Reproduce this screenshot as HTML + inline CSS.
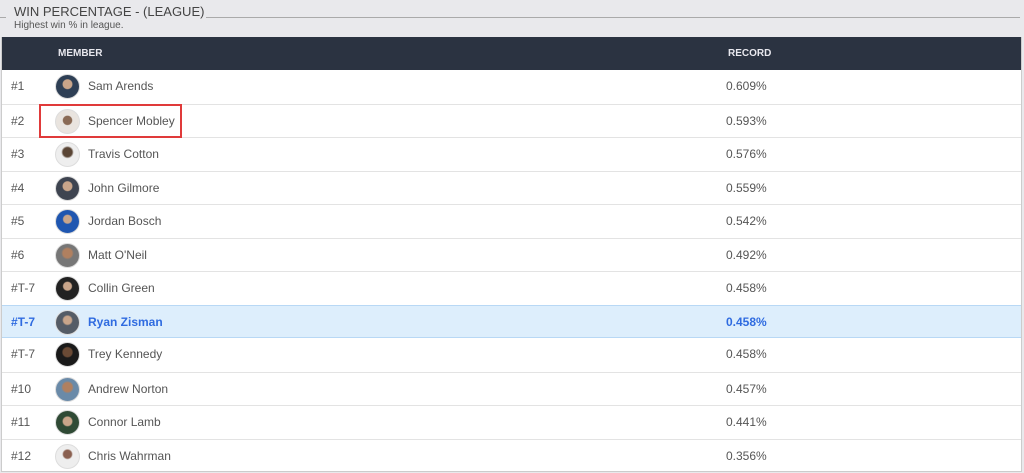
<!DOCTYPE html>
<html><head><style>
body{margin:0;width:1024px;height:473px;background:#e9e9ec;font-family:"Liberation Sans",sans-serif;position:relative;overflow:hidden}
.t{position:absolute;left:14px;top:4px;font-size:13px;color:#444;letter-spacing:0}
.l1{position:absolute;left:0;top:17px;width:6px;height:1px;background:#aaa}
.l2{position:absolute;left:206px;top:17px;width:814px;height:1px;background:#aaa}
.s{position:absolute;left:14px;top:20px;font-size:10px;color:#555}
.tb{position:absolute;left:1px;top:37px;width:1021px;height:435px;background:#fff;border:1px solid #ccc;border-top:none;box-sizing:border-box}
.h{height:33px;background:#2b3341;color:#e8e8ee;font-size:10px;font-weight:bold;position:relative}
.h span{position:absolute;top:11px}
.r{height:33.5px;border-top:1px solid #e3e3e3;box-sizing:border-box;position:relative;font-size:12px;color:#555}
.r span{position:absolute;top:9px}
.a{position:absolute;left:53px;top:4px;width:25px;height:25px;border-radius:50%;border:1px solid #ddd;box-sizing:border-box}
.hl{background:#ddeefc;border-top:1px solid #b8d8f5;border-bottom:1px solid #b8d8f5;color:#2f6be0;font-weight:bold}
.box{position:absolute;left:39px;top:104px;width:143px;height:34px;border:2px solid #e03a3a;box-sizing:border-box}
</style></head><body>
<div class="t">WIN PERCENTAGE - (LEAGUE)</div><div class="l1"></div><div class="l2"></div>
<div class="s">Highest win % in league.</div>
<div class="tb">
<div class="h"><span style="left:56px">MEMBER</span><span style="left:726px">RECORD</span></div>
<div class="r" style="border-top:none"><span style="left:9px">#1</span><div class="a" style="background:radial-gradient(circle at 50% 40%,#c9a58a 25%,#2e3f55 30%)"></div><span style="left:86px">Sam Arends</span><span style="left:724px">0.609%</span></div>
<div class="r"><span style="left:9px">#2</span><div class="a" style="background:radial-gradient(circle at 50% 45%,#8a6a55 25%,#e9e4df 30%)"></div><span style="left:86px">Spencer Mobley</span><span style="left:724px">0.593%</span></div>
<div class="r"><span style="left:9px">#3</span><div class="a" style="background:radial-gradient(circle at 50% 40%,#5a4535 25%,#eee 35%)"></div><span style="left:86px">Travis Cotton</span><span style="left:724px">0.576%</span></div>
<div class="r"><span style="left:9px">#4</span><div class="a" style="background:radial-gradient(circle at 50% 40%,#c9a58a 25%,#3e4450 30%)"></div><span style="left:86px">John Gilmore</span><span style="left:724px">0.559%</span></div>
<div class="r"><span style="left:9px">#5</span><div class="a" style="background:radial-gradient(circle at 50% 40%,#c9a58a 22%,#1f56b0 28%)"></div><span style="left:86px">Jordan Bosch</span><span style="left:724px">0.542%</span></div>
<div class="r"><span style="left:9px">#6</span><div class="a" style="background:radial-gradient(circle at 50% 40%,#b08060 25%,#777 35%)"></div><span style="left:86px">Matt O'Neil</span><span style="left:724px">0.492%</span></div>
<div class="r"><span style="left:9px">#T-7</span><div class="a" style="background:radial-gradient(circle at 50% 40%,#c9a58a 22%,#222 28%)"></div><span style="left:86px">Collin Green</span><span style="left:724px">0.458%</span></div>
<div class="r hl"><span style="left:9px">#T-7</span><div class="a" style="background:radial-gradient(circle at 50% 40%,#c9a58a 22%,#555c66 30%)"></div><span style="left:86px">Ryan Zisman</span><span style="left:724px">0.458%</span></div>
<div class="r" style="border-top:none"><span style="left:9px">#T-7</span><div class="a" style="background:radial-gradient(circle at 50% 40%,#6a4a35 25%,#1a1a1a 32%)"></div><span style="left:86px">Trey Kennedy</span><span style="left:724px">0.458%</span></div>
<div class="r"><span style="left:9px">#10</span><div class="a" style="background:radial-gradient(circle at 50% 40%,#b08060 25%,#6a8aa8 35%)"></div><span style="left:86px">Andrew Norton</span><span style="left:724px">0.457%</span></div>
<div class="r"><span style="left:9px">#11</span><div class="a" style="background:radial-gradient(circle at 50% 45%,#c9a58a 25%,#2f4a35 32%)"></div><span style="left:86px">Connor Lamb</span><span style="left:724px">0.441%</span></div>
<div class="r"><span style="left:9px">#12</span><div class="a" style="background:radial-gradient(circle at 50% 40%,#8a6050 22%,#eee 30%)"></div><span style="left:86px">Chris Wahrman</span><span style="left:724px">0.356%</span></div>
</div>
<div class="box"></div>
</body></html>
